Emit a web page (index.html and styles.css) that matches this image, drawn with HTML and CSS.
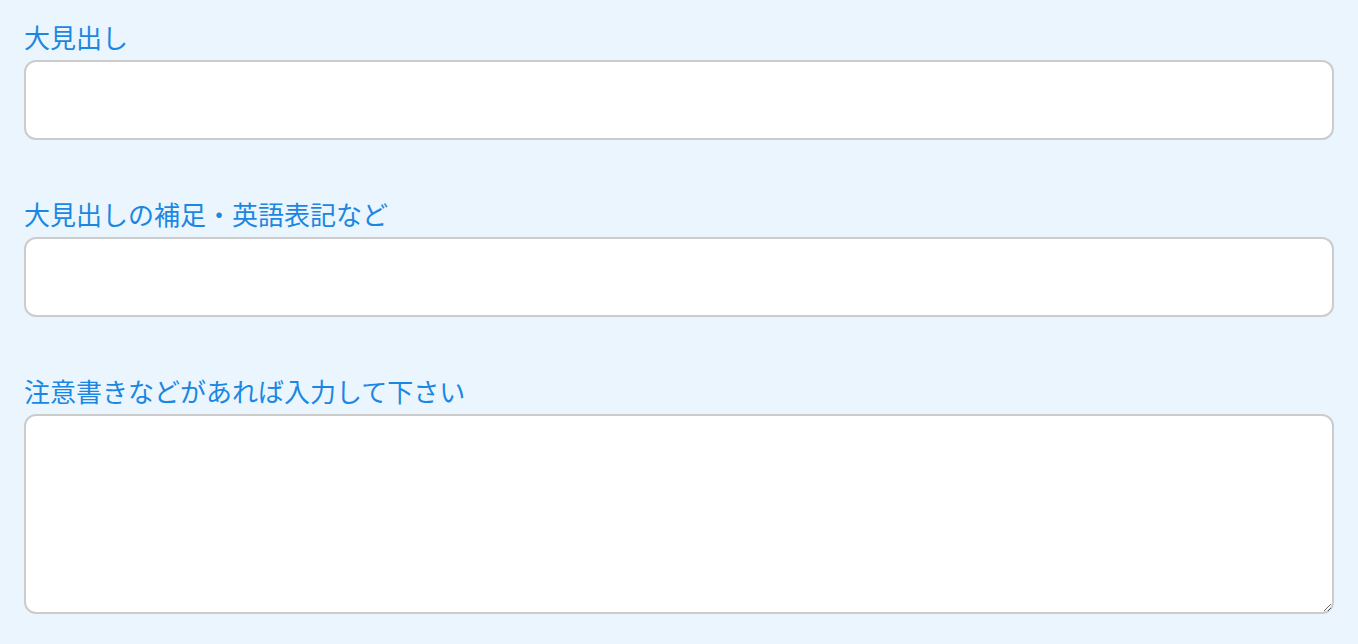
FILE: index.html
```html
<!DOCTYPE html>
<html lang="ja">
<head>
<meta charset="utf-8">
<title>Form</title>
<link rel="stylesheet" href="styles.css">
</head>
<body>
<form class="form">
  <div class="field">
    <label class="label" for="h1">大見出し</label>
    <input class="input" id="h1" type="text">
  </div>
  <div class="field">
    <label class="label" for="h2">大見出しの補足・英語表記など</label>
    <input class="input" id="h2" type="text">
  </div>
  <div class="field">
    <label class="label" for="note">注意書きなどがあれば入力して下さい</label>
    <textarea class="textarea" id="note"></textarea>
  </div>
</form>
</body>
</html>
```
FILE: styles.css
```css
html, body {
  margin: 0;
  padding: 0;
  background: #eaf5fe;
}
body {
  font-family: "Noto Sans CJK JP", "Noto Sans", sans-serif;
}
.form {
  display: flex;
  flex-direction: column;
  gap: 57px;
  padding: 20px 24px 0;
}
.field {
  display: flex;
  flex-direction: column;
}
.label {
  display: block;
  font-size: 26px;
  line-height: 34px;
  color: #1b87e2;
  margin-bottom: 6px;
}
.input, .textarea {
  box-sizing: border-box;
  width: 100%;
  border: 2px solid #cccccc;
  border-radius: 12px;
  background: #ffffff;
  font-size: 20px;
  padding: 8px 12px;
  outline: none;
}
.input {
  height: 80px;
}
.textarea {
  height: 200px;
  resize: vertical;
  font-family: inherit;
}
```
